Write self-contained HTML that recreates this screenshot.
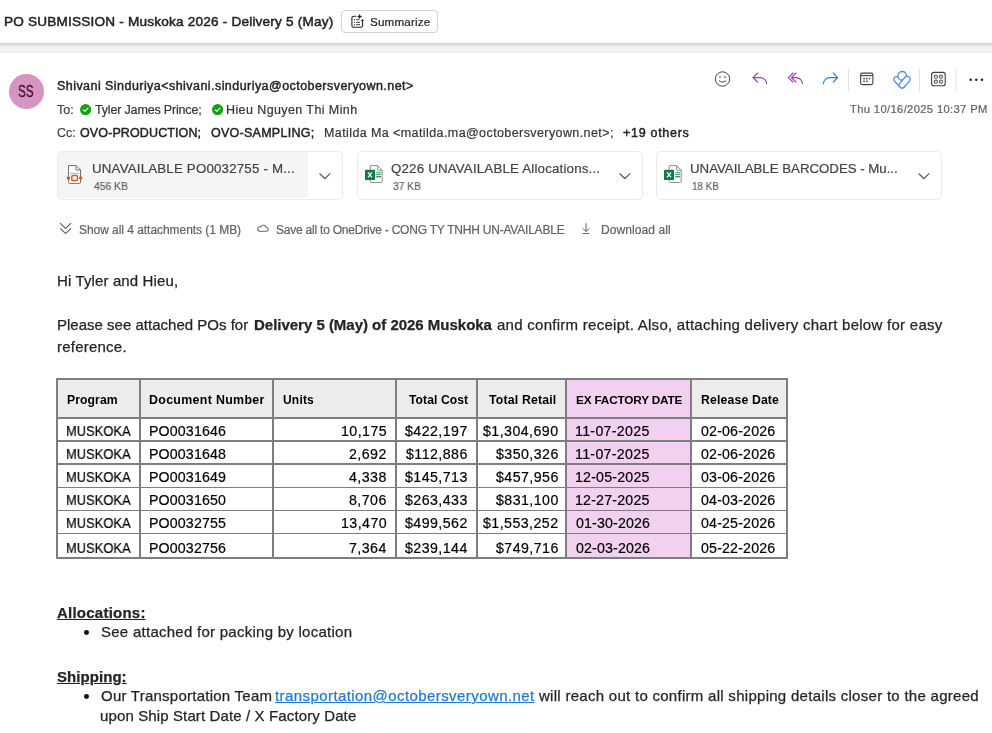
<!DOCTYPE html>
<html><head><meta charset="utf-8">
<style>
html,body{margin:0;padding:0;background:#fff;}
body{width:992px;height:733px;overflow:hidden;position:relative;font-family:"Liberation Sans", sans-serif;}
.t{position:absolute;white-space:nowrap;line-height:1;will-change:transform;}
.abs{position:absolute;}
</style></head><body>
<div class="abs" style="left:341px;top:10px;width:95px;height:21px;border:1px solid #d1d1d1;border-radius:4px;"></div>
<div class="abs" style="left:0;top:43px;width:992px;height:10px;background:linear-gradient(#cdcdcd 0px,#e6e6e6 2px,#f3f3f3 5px,#f3f3f3 8px,#e3e3e3 9px,#fafafa 10px);"></div>
<div class="abs" style="left:8.5px;top:74px;width:35px;height:35px;border-radius:50%;background:#d695c0;"></div>
<svg class="abs" style="left:79.5px;top:104px" width="11.2" height="11.2" viewBox="0 0 11.2 11.2"><circle cx="5.6" cy="5.6" r="5.6" fill="#13a10e"/><path d="M3.3 5.8 L4.9 7.3 L8 4.2" fill="none" stroke="#fff" stroke-width="1.1" stroke-linecap="round" stroke-linejoin="round"/></svg>
<svg class="abs" style="left:212.4px;top:104px" width="11.2" height="11.2" viewBox="0 0 11.2 11.2"><circle cx="5.6" cy="5.6" r="5.6" fill="#13a10e"/><path d="M3.3 5.8 L4.9 7.3 L8 4.2" fill="none" stroke="#fff" stroke-width="1.1" stroke-linecap="round" stroke-linejoin="round"/></svg>
<div class="abs" style="left:57px;top:151px;width:284px;height:46.5px;border:1px solid #ebebeb;border-radius:5px;background:#fff;overflow:hidden;"><div class="abs" style="left:0;top:0;width:250px;height:46px;background:#f5f5f5;"></div></div>
<svg class="abs" style="left:64px;top:163px" width="22" height="22" viewBox="0 0 22 22"><path d="M4.5 2.5 h7.5 l4.5 4.5 v12.5 a0.9 0.9 0 0 1 -0.9 0.9 h-10.2 a0.9 0.9 0 0 1 -0.9 -0.9 z" fill="#fff" stroke="#707070" stroke-width="1"/><path d="M12 2.5 v4.5 h4.5" fill="none" stroke="#707070" stroke-width="1"/><path d="M6 10.3 h9" stroke="#a0a0a0" stroke-width="0.9"/><rect x="7.8" y="12.6" width="5.6" height="4.8" rx="1" fill="none" stroke="#e0512a" stroke-width="1.5"/><circle cx="4.4" cy="15" r="1.75" fill="#e0512a"/><circle cx="16.6" cy="15" r="1.75" fill="#e0512a"/></svg>
<svg class="abs" style="left:318px;top:170.8px" width="14" height="10" viewBox="0 0 14 10"><path d="M1.5 2.5 L6.9 7.5 L12.3 2.4" fill="none" stroke="#616161" stroke-width="1.3"/></svg>
<div class="abs" style="left:357px;top:151px;width:284px;height:46.5px;border:1px solid #ebebeb;border-radius:5px;background:#fff;"></div>
<svg class="abs" style="left:364.1px;top:164px" width="20" height="20" viewBox="-1 -1 20 20"><path d="M5.2 0.6 H12.6 L17.2 5.2 V16.6 a0.9 0.9 0 0 1 -0.9 0.9 H6.1 a0.9 0.9 0 0 1 -0.9 -0.9 Z" fill="#fff" stroke="#8f8f8f" stroke-width="1"/><path d="M12.6 0.6 V4.3 a0.9 0.9 0 0 0 0.9 0.9 H17.2" fill="none" stroke="#8f8f8f" stroke-width="1"/><rect x="11.2" y="6.7" width="4.9" height="1.2" fill="#33c481"/><rect x="11.2" y="8.7" width="4.9" height="1.2" fill="#21a366"/><rect x="11.2" y="11.1" width="4.9" height="1.3" fill="#185c37" opacity="0.8"/><rect x="0" y="4.8" width="10" height="10.1" rx="0.5" fill="#107c41"/><path d="M3 7.4 L7 12.4 M7 7.4 L3 12.4" stroke="#fff" stroke-width="1.25"/></svg>
<svg class="abs" style="left:618px;top:170.8px" width="14" height="10" viewBox="0 0 14 10"><path d="M1.5 2.5 L6.9 7.5 L12.3 2.4" fill="none" stroke="#616161" stroke-width="1.3"/></svg>
<div class="abs" style="left:656px;top:151px;width:284px;height:46.5px;border:1px solid #ebebeb;border-radius:5px;background:#fff;"></div>
<svg class="abs" style="left:662.9px;top:164px" width="20" height="20" viewBox="-1 -1 20 20"><path d="M5.2 0.6 H12.6 L17.2 5.2 V16.6 a0.9 0.9 0 0 1 -0.9 0.9 H6.1 a0.9 0.9 0 0 1 -0.9 -0.9 Z" fill="#fff" stroke="#8f8f8f" stroke-width="1"/><path d="M12.6 0.6 V4.3 a0.9 0.9 0 0 0 0.9 0.9 H17.2" fill="none" stroke="#8f8f8f" stroke-width="1"/><rect x="11.2" y="6.7" width="4.9" height="1.2" fill="#33c481"/><rect x="11.2" y="8.7" width="4.9" height="1.2" fill="#21a366"/><rect x="11.2" y="11.1" width="4.9" height="1.3" fill="#185c37" opacity="0.8"/><rect x="0" y="4.8" width="10" height="10.1" rx="0.5" fill="#107c41"/><path d="M3 7.4 L7 12.4 M7 7.4 L3 12.4" stroke="#fff" stroke-width="1.25"/></svg>
<svg class="abs" style="left:917px;top:170.8px" width="14" height="10" viewBox="0 0 14 10"><path d="M1.5 2.5 L6.9 7.5 L12.3 2.4" fill="none" stroke="#616161" stroke-width="1.3"/></svg>
<svg class="abs" style="left:59px;top:221px" width="14" height="14" viewBox="0 0 14 14"><path d="M1.1 2.1 L6.6 7.4 L12 2.1 M1.1 7.3 L6.6 12.4 L12 7.3" fill="none" stroke="#616161" stroke-width="1.1"/></svg>
<svg class="abs" style="left:254px;top:221px" width="16" height="14" viewBox="254 221 16 14"><path d="M259.4 231.3 H266.3 A1.9 1.9 0 0 0 266.3 227.5 A2.9 2.9 0 0 0 260.8 226.9 A2.2 2.2 0 0 0 259.4 231.3 Z" fill="none" stroke="#616161" stroke-width="1.05"/></svg>
<svg class="abs" style="left:580px;top:221px" width="12" height="14" viewBox="0 0 12 14"><path d="M6 2.2 v8.5 M2.6 7.2 L6 10.5 L9.4 7.2 M2.8 12.5 h6.3" fill="none" stroke="#616161" stroke-width="1"/></svg>
<svg class="abs" style="left:700px;top:62px" width="292" height="34" viewBox="700 62 292 34">
<circle cx="722.5" cy="79" r="7.2" fill="none" stroke="#424242" stroke-width="1"/>
<circle cx="720" cy="77" r="0.85" fill="#424242"/><circle cx="725" cy="77" r="0.85" fill="#424242"/>
<path d="M719.2 80.8 q3.3 2.8 6.6 0" fill="none" stroke="#424242" stroke-width="1" stroke-linecap="round"/>
<g fill="none" stroke="#9c3db3" stroke-width="1.15" stroke-linecap="round" stroke-linejoin="round">
<path d="M757.6 73 L753 77.6 L757.6 82 M753 77.6 H760 A6.7 6.3 0 0 1 766.7 83.6"/>
<path d="M793 73 L788.3 77.6 L793 82 M796 73 L791.3 77.6 L796 82 M791.3 77.6 H796 A6.5 6.3 0 0 1 802.5 83.6"/>
</g>
<g fill="none" stroke="#1f84d8" stroke-width="1.15" stroke-linecap="round" stroke-linejoin="round">
<path d="M833.2 73 L837.7 77.6 L833.2 82 M837.7 77.6 H830 A6.7 6.3 0 0 0 823.4 83.6"/>
</g>
<rect x="848" y="69" width="1" height="22" fill="#e0e0e0"/>
<rect x="860.6" y="73.1" width="12.3" height="11.5" rx="1.8" fill="none" stroke="#424242" stroke-width="1.1"/>
<path d="M860.6 75.6 H872.9" stroke="#424242" stroke-width="1.1"/>
<g fill="#424242"><rect x="863.3" y="77.8" width="1.5" height="1.5"/><rect x="866" y="77.8" width="1.5" height="1.5"/><rect x="868.7" y="77.8" width="1.5" height="1.5"/><rect x="863.3" y="80.6" width="1.5" height="1.5"/><rect x="866" y="80.6" width="1.5" height="1.5"/></g>
<g fill="#fff" stroke="#4f8ef7" stroke-width="1.3">
<rect x="-2.8" y="-2.8" width="13.6" height="5.6" rx="2.8" transform="translate(896.6 79.4) rotate(47)"/>
<circle cx="902.2" cy="75.8" r="4.3"/>
<rect x="-2.9" y="-2.9" width="13.7" height="5.8" rx="2.9" transform="translate(902 85.1) rotate(-48.5)"/>
</g>
<rect x="919" y="69" width="1" height="22" fill="#e0e0e0"/>
<rect x="931.6" y="72.4" width="13.6" height="13.4" rx="2.3" fill="none" stroke="#424242" stroke-width="1.1"/>
<g fill="none" stroke="#424242" stroke-width="1"><rect x="934.4" y="75.2" width="2.9" height="2.9" rx="0.5"/><rect x="939.5" y="75.2" width="2.9" height="2.9" rx="0.5"/><rect x="934.4" y="80.2" width="2.9" height="2.9" rx="0.5"/><rect x="939.5" y="80.2" width="2.9" height="2.9" rx="0.5"/></g>
<rect x="955.5" y="69" width="1" height="22" fill="#e0e0e0"/>
<g fill="#242424"><circle cx="970.7" cy="79.8" r="1.3"/><circle cx="976.3" cy="79.8" r="1.3"/><circle cx="982" cy="79.8" r="1.3"/></g>
</svg>

<svg class="abs" style="left:349px;top:13px" width="18" height="18" viewBox="349 13 18 18">
<path d="M356.3 16.3 H353.7 a1.8 1.8 0 0 0 -1.8 1.8 v7.3 a1.8 1.8 0 0 0 1.8 1.8 h7.1 a1.8 1.8 0 0 0 1.8 -1.8 v-3.3" fill="none" stroke="#242424" stroke-width="1.1"/>
<g fill="#242424"><circle cx="354.6" cy="19.7" r="0.6"/><circle cx="354.6" cy="22.3" r="0.6"/><circle cx="354.6" cy="24.7" r="0.6"/></g>
<path d="M356.2 19.7 h3.2 M356.2 22.3 h3.9 M356.2 24.7 h3.9" stroke="#242424" stroke-width="0.9"/>
<path d="M359.6 13.9 q0.5 2.1 2.6 2.6 q-2.1 0.5 -2.6 2.6 q-0.5 -2.1 -2.6 -2.6 q2.1 -0.5 2.6 -2.6 z" fill="#242424"/>
<path d="M362.4 18.8 q0.35 1.45 1.8 1.8 q-1.45 0.35 -1.8 1.8 q-0.35 -1.45 -1.8 -1.8 q1.45 -0.35 1.8 -1.8 z" fill="#242424"/>
</svg>

<div class="abs" style="left:57px;top:379px;width:730px;height:39px;background:#ececec;"></div>
<div class="abs" style="left:566px;top:379px;width:125px;height:179px;background:#f2d0ef;"></div>
<div class="abs" style="left:56.05px;top:378.05px;width:1.5px;height:180.54999999999998px;background:#7e7e7e;"></div>
<div class="abs" style="left:139.05px;top:378.05px;width:1.5px;height:180.54999999999998px;background:#7e7e7e;"></div>
<div class="abs" style="left:272.05px;top:378.05px;width:1.5px;height:180.54999999999998px;background:#7e7e7e;"></div>
<div class="abs" style="left:395.05px;top:378.05px;width:1.5px;height:180.54999999999998px;background:#7e7e7e;"></div>
<div class="abs" style="left:476.05px;top:378.05px;width:1.5px;height:180.54999999999998px;background:#7e7e7e;"></div>
<div class="abs" style="left:565.05px;top:378.05px;width:1.5px;height:180.54999999999998px;background:#7e7e7e;"></div>
<div class="abs" style="left:690.05px;top:378.05px;width:1.5px;height:180.54999999999998px;background:#7e7e7e;"></div>
<div class="abs" style="left:786.05px;top:378.05px;width:1.5px;height:180.54999999999998px;background:#7e7e7e;"></div>
<div class="abs" style="left:56.05px;top:378.05px;width:731.5500000000001px;height:1.5px;background:#7e7e7e;"></div>
<div class="abs" style="left:56.05px;top:417.05px;width:731.5500000000001px;height:1.5px;background:#7e7e7e;"></div>
<div class="abs" style="left:56.05px;top:440.05px;width:731.5500000000001px;height:1.5px;background:#7e7e7e;"></div>
<div class="abs" style="left:56.05px;top:463.05px;width:731.5500000000001px;height:1.5px;background:#7e7e7e;"></div>
<div class="abs" style="left:56.05px;top:486.55px;width:731.5500000000001px;height:1.5px;background:#7e7e7e;"></div>
<div class="abs" style="left:56.05px;top:509.55px;width:731.5500000000001px;height:1.5px;background:#7e7e7e;"></div>
<div class="abs" style="left:56.05px;top:532.55px;width:731.5500000000001px;height:1.5px;background:#7e7e7e;"></div>
<div class="abs" style="left:56.05px;top:557.05px;width:731.5500000000001px;height:1.5px;background:#7e7e7e;"></div>
<div class="abs" style="left:84.1px;top:630.4px;width:4.8px;height:4.8px;border-radius:50%;background:#111;"></div>
<div class="abs" style="left:84.1px;top:694.4px;width:4.8px;height:4.8px;border-radius:50%;background:#111;"></div>
<div class="t" style="left:3.60px;top:15px;font-size:13.6px;color:#242424;letter-spacing:0.196px;-webkit-text-stroke:0.5px #242424;">PO SUBMISSION - Muskoka 2026 - Delivery 5 (May)</div>
<div class="t" style="left:369.60px;top:16px;font-size:11.7px;color:#242424;letter-spacing:0.150px;-webkit-text-stroke-width:0.2px;">Summarize</div>
<div class="t" style="left:18.40px;top:84px;font-size:15.6px;color:#420b35;transform:scaleX(0.7402);transform-origin:0 0;-webkit-text-stroke:0.3px #4a0d3a;">SS</div>
<div class="t" style="left:57.00px;top:80px;font-size:12.5px;color:#242424;letter-spacing:0.449px;-webkit-text-stroke:0.45px #242424;">Shivani Sinduriya&lt;shivani.sinduriya@octobersveryown.net&gt;</div>
<div class="t" style="left:57.00px;top:104px;font-size:12.5px;color:#424242;-webkit-text-stroke-width:0.2px;">To:</div>
<div class="t" style="left:95.30px;top:104px;font-size:12.5px;color:#333333;letter-spacing:-0.171px;-webkit-text-stroke-width:0.2px;">Tyler James Prince;</div>
<div class="t" style="left:225.60px;top:104px;font-size:12.5px;color:#333333;letter-spacing:0.404px;-webkit-text-stroke-width:0.2px;">Hieu Nguyen Thi Minh</div>
<div class="t" style="left:57.00px;top:127px;font-size:12.5px;color:#424242;-webkit-text-stroke-width:0.2px;">Cc:</div>
<div class="t" style="left:80.40px;top:127px;font-size:12.5px;color:#242424;letter-spacing:0.116px;-webkit-text-stroke:0.45px #242424;">OVO-PRODUCTION;</div>
<div class="t" style="left:211.00px;top:127px;font-size:12.5px;color:#242424;letter-spacing:0.263px;-webkit-text-stroke:0.45px #242424;">OVO-SAMPLING;</div>
<div class="t" style="left:324.00px;top:127px;font-size:12.5px;color:#333333;letter-spacing:0.408px;-webkit-text-stroke-width:0.2px;">Matilda Ma &lt;matilda.ma@octobersveryown.net&gt;;</div>
<div class="t" style="left:623.00px;top:127px;font-size:12.5px;color:#242424;letter-spacing:0.704px;-webkit-text-stroke:0.45px #242424;">+19 others</div>
<div class="t" style="left:850.00px;top:104px;font-size:11.2px;color:#616161;letter-spacing:0.361px;-webkit-text-stroke-width:0.2px;">Thu 10/16/2025 10:37 PM</div>
<div class="t" style="left:91.60px;top:162px;font-size:13.3px;color:#424242;letter-spacing:0.186px;-webkit-text-stroke-width:0.2px;">UNAVAILABLE PO0032755 - M...</div>
<div class="t" style="left:93.90px;top:181px;font-size:10.8px;color:#616161;transform:scaleX(0.9570);transform-origin:0 0;-webkit-text-stroke-width:0.2px;">456 KB</div>
<div class="t" style="left:391.40px;top:162px;font-size:13.3px;color:#424242;letter-spacing:0.185px;-webkit-text-stroke-width:0.2px;">Q226 UNAVAILABLE Allocations...</div>
<div class="t" style="left:392.80px;top:181px;font-size:10.8px;color:#616161;transform:scaleX(0.9483);transform-origin:0 0;-webkit-text-stroke-width:0.2px;">37 KB</div>
<div class="t" style="left:690.40px;top:162px;font-size:13.3px;color:#424242;letter-spacing:-0.034px;-webkit-text-stroke-width:0.2px;">UNAVAILABLE BARCODES - Mu...</div>
<div class="t" style="left:691.70px;top:181px;font-size:10.8px;color:#616161;transform:scaleX(0.9106);transform-origin:0 0;-webkit-text-stroke-width:0.2px;">18 KB</div>
<div class="t" style="left:79.40px;top:224px;font-size:12px;color:#616161;letter-spacing:-0.047px;-webkit-text-stroke-width:0.2px;">Show all 4 attachments (1 MB)</div>
<div class="t" style="left:276.10px;top:224px;font-size:12px;color:#616161;letter-spacing:-0.220px;-webkit-text-stroke-width:0.2px;">Save all to OneDrive - CONG TY TNHH UN-AVAILABLE</div>
<div class="t" style="left:600.60px;top:224px;font-size:12px;color:#616161;letter-spacing:0.087px;-webkit-text-stroke-width:0.2px;">Download all</div>
<div class="t" style="left:56.80px;top:273px;font-size:15.0px;color:#242424;letter-spacing:0.127px;-webkit-text-stroke-width:0.25px;">Hi Tyler and Hieu,</div>
<div class="t" style="left:56.80px;top:317px;font-size:15.0px;color:#242424;letter-spacing:0.010px;-webkit-text-stroke-width:0.25px;">Please see attached POs for</div>
<div class="t" style="left:254.00px;top:317px;font-size:15.0px;color:#242424;letter-spacing:-0.016px;-webkit-text-stroke-width:0.25px;"><span style="font-weight:bold;">Delivery 5 (May) of 2026 Muskoka</span></div>
<div class="t" style="left:497.40px;top:317px;font-size:15.0px;color:#242424;letter-spacing:0.270px;-webkit-text-stroke-width:0.25px;">and confirm receipt. Also, attaching delivery chart below for easy</div>
<div class="t" style="left:56.80px;top:339px;font-size:15.0px;color:#242424;letter-spacing:0.226px;-webkit-text-stroke-width:0.25px;">reference.</div>
<div class="t" style="left:66.70px;top:394px;font-size:12.2px;color:#000;letter-spacing:0.086px;"><span style="font-weight:bold;">Program</span></div>
<div class="t" style="left:148.60px;top:394px;font-size:12.4px;color:#000;letter-spacing:0.320px;"><span style="font-weight:bold;">Document Number</span></div>
<div class="t" style="left:282.50px;top:394px;font-size:12.0px;color:#000;letter-spacing:0.193px;"><span style="font-weight:bold;">Units</span></div>
<div class="t" style="left:408.60px;top:394px;font-size:12.1px;color:#000;letter-spacing:0.089px;"><span style="font-weight:bold;">Total Cost</span></div>
<div class="t" style="left:488.70px;top:394px;font-size:12.3px;color:#000;letter-spacing:0.168px;"><span style="font-weight:bold;">Total Retail</span></div>
<div class="t" style="left:575.80px;top:395px;font-size:11.8px;color:#000;letter-spacing:-0.184px;"><span style="font-weight:bold;">EX FACTORY DATE</span></div>
<div class="t" style="left:700.50px;top:394px;font-size:12.2px;color:#000;letter-spacing:0.182px;"><span style="font-weight:bold;">Release Date</span></div>
<div class="t" style="left:66.09px;top:424px;font-size:14.2px;color:#000;transform:scaleX(0.9115);transform-origin:0 0;-webkit-text-stroke-width:0.2px;">MUSKOKA</div>
<div class="t" style="left:148.50px;top:424px;font-size:14.2px;color:#000;letter-spacing:0.145px;-webkit-text-stroke-width:0.2px;">PO0031646</div>
<div class="t" style="left:340.95px;top:424px;font-size:14.2px;color:#000;letter-spacing:0.450px;-webkit-text-stroke-width:0.2px;">10,175</div>
<div class="t" style="left:405.37px;top:424px;font-size:14.2px;color:#000;letter-spacing:0.450px;-webkit-text-stroke-width:0.2px;">$422,197</div>
<div class="t" style="left:483.03px;top:424px;font-size:14.2px;color:#000;letter-spacing:0.450px;-webkit-text-stroke-width:0.2px;">$1,304,690</div>
<div class="t" style="left:574.80px;top:424px;font-size:14.2px;color:#000;letter-spacing:0.319px;-webkit-text-stroke-width:0.2px;">11-07-2025</div>
<div class="t" style="left:700.50px;top:424px;font-size:14.2px;color:#000;letter-spacing:0.180px;-webkit-text-stroke-width:0.2px;">02-06-2026</div>
<div class="t" style="left:66.09px;top:447px;font-size:14.2px;color:#000;transform:scaleX(0.9115);transform-origin:0 0;-webkit-text-stroke-width:0.2px;">MUSKOKA</div>
<div class="t" style="left:148.50px;top:447px;font-size:14.2px;color:#000;letter-spacing:0.145px;-webkit-text-stroke-width:0.2px;">PO0031648</div>
<div class="t" style="left:349.29px;top:447px;font-size:14.2px;color:#000;letter-spacing:0.450px;-webkit-text-stroke-width:0.2px;">2,692</div>
<div class="t" style="left:406.42px;top:447px;font-size:14.2px;color:#000;letter-spacing:0.450px;-webkit-text-stroke-width:0.2px;">$112,886</div>
<div class="t" style="left:495.77px;top:447px;font-size:14.2px;color:#000;letter-spacing:0.450px;-webkit-text-stroke-width:0.2px;">$350,326</div>
<div class="t" style="left:574.80px;top:447px;font-size:14.2px;color:#000;letter-spacing:0.319px;-webkit-text-stroke-width:0.2px;">11-07-2025</div>
<div class="t" style="left:700.50px;top:447px;font-size:14.2px;color:#000;letter-spacing:0.180px;-webkit-text-stroke-width:0.2px;">02-06-2026</div>
<div class="t" style="left:66.09px;top:470px;font-size:14.2px;color:#000;transform:scaleX(0.9115);transform-origin:0 0;-webkit-text-stroke-width:0.2px;">MUSKOKA</div>
<div class="t" style="left:148.50px;top:470px;font-size:14.2px;color:#000;letter-spacing:0.145px;-webkit-text-stroke-width:0.2px;">PO0031649</div>
<div class="t" style="left:349.29px;top:470px;font-size:14.2px;color:#000;letter-spacing:0.450px;-webkit-text-stroke-width:0.2px;">4,338</div>
<div class="t" style="left:405.37px;top:470px;font-size:14.2px;color:#000;letter-spacing:0.450px;-webkit-text-stroke-width:0.2px;">$145,713</div>
<div class="t" style="left:495.77px;top:470px;font-size:14.2px;color:#000;letter-spacing:0.450px;-webkit-text-stroke-width:0.2px;">$457,956</div>
<div class="t" style="left:574.80px;top:470px;font-size:14.2px;color:#000;letter-spacing:0.202px;-webkit-text-stroke-width:0.2px;">12-05-2025</div>
<div class="t" style="left:700.50px;top:470px;font-size:14.2px;color:#000;letter-spacing:0.180px;-webkit-text-stroke-width:0.2px;">03-06-2026</div>
<div class="t" style="left:66.09px;top:493px;font-size:14.2px;color:#000;transform:scaleX(0.9115);transform-origin:0 0;-webkit-text-stroke-width:0.2px;">MUSKOKA</div>
<div class="t" style="left:148.50px;top:493px;font-size:14.2px;color:#000;letter-spacing:0.145px;-webkit-text-stroke-width:0.2px;">PO0031650</div>
<div class="t" style="left:349.29px;top:493px;font-size:14.2px;color:#000;letter-spacing:0.450px;-webkit-text-stroke-width:0.2px;">8,706</div>
<div class="t" style="left:405.37px;top:493px;font-size:14.2px;color:#000;letter-spacing:0.450px;-webkit-text-stroke-width:0.2px;">$263,433</div>
<div class="t" style="left:495.77px;top:493px;font-size:14.2px;color:#000;letter-spacing:0.450px;-webkit-text-stroke-width:0.2px;">$831,100</div>
<div class="t" style="left:574.80px;top:493px;font-size:14.2px;color:#000;letter-spacing:0.202px;-webkit-text-stroke-width:0.2px;">12-27-2025</div>
<div class="t" style="left:700.50px;top:493px;font-size:14.2px;color:#000;letter-spacing:0.180px;-webkit-text-stroke-width:0.2px;">04-03-2026</div>
<div class="t" style="left:66.09px;top:516px;font-size:14.2px;color:#000;transform:scaleX(0.9115);transform-origin:0 0;-webkit-text-stroke-width:0.2px;">MUSKOKA</div>
<div class="t" style="left:148.50px;top:516px;font-size:14.2px;color:#000;letter-spacing:0.145px;-webkit-text-stroke-width:0.2px;">PO0032755</div>
<div class="t" style="left:340.95px;top:516px;font-size:14.2px;color:#000;letter-spacing:0.450px;-webkit-text-stroke-width:0.2px;">13,470</div>
<div class="t" style="left:405.37px;top:516px;font-size:14.2px;color:#000;letter-spacing:0.450px;-webkit-text-stroke-width:0.2px;">$499,562</div>
<div class="t" style="left:483.03px;top:516px;font-size:14.2px;color:#000;letter-spacing:0.450px;-webkit-text-stroke-width:0.2px;">$1,553,252</div>
<div class="t" style="left:575.80px;top:516px;font-size:14.2px;color:#000;letter-spacing:0.146px;-webkit-text-stroke-width:0.2px;">01-30-2026</div>
<div class="t" style="left:700.50px;top:516px;font-size:14.2px;color:#000;letter-spacing:0.180px;-webkit-text-stroke-width:0.2px;">04-25-2026</div>
<div class="t" style="left:66.09px;top:541px;font-size:14.2px;color:#000;transform:scaleX(0.9115);transform-origin:0 0;-webkit-text-stroke-width:0.2px;">MUSKOKA</div>
<div class="t" style="left:148.50px;top:541px;font-size:14.2px;color:#000;letter-spacing:0.145px;-webkit-text-stroke-width:0.2px;">PO0032756</div>
<div class="t" style="left:349.29px;top:541px;font-size:14.2px;color:#000;letter-spacing:0.450px;-webkit-text-stroke-width:0.2px;">7,364</div>
<div class="t" style="left:405.37px;top:541px;font-size:14.2px;color:#000;letter-spacing:0.450px;-webkit-text-stroke-width:0.2px;">$239,144</div>
<div class="t" style="left:495.77px;top:541px;font-size:14.2px;color:#000;letter-spacing:0.450px;-webkit-text-stroke-width:0.2px;">$749,716</div>
<div class="t" style="left:575.80px;top:541px;font-size:14.2px;color:#000;letter-spacing:0.146px;-webkit-text-stroke-width:0.2px;">02-03-2026</div>
<div class="t" style="left:700.50px;top:541px;font-size:14.2px;color:#000;letter-spacing:0.180px;-webkit-text-stroke-width:0.2px;">05-22-2026</div>
<div class="t" style="left:57.00px;top:605px;font-size:15.0px;color:#242424;letter-spacing:0.232px;-webkit-text-stroke-width:0.25px;"><span style="font-weight:bold;text-decoration:underline;text-underline-offset:1px;">Allocations:</span></div>
<div class="t" style="left:101.00px;top:624px;font-size:15.0px;color:#242424;letter-spacing:0.263px;-webkit-text-stroke-width:0.25px;">See attached for packing by location</div>
<div class="t" style="left:57.00px;top:669px;font-size:15.0px;color:#242424;letter-spacing:0.056px;-webkit-text-stroke-width:0.25px;"><span style="font-weight:bold;text-decoration:underline;text-underline-offset:1px;">Shipping:</span></div>
<div class="t" style="left:101.00px;top:688px;font-size:15.0px;color:#242424;letter-spacing:0.242px;-webkit-text-stroke-width:0.25px;">Our Transportation Team</div>
<div class="t" style="left:275.40px;top:688px;font-size:15.0px;color:#1e7ad6;letter-spacing:0.419px;-webkit-text-stroke-width:0.25px;"><span style="text-decoration:underline;">transportation@octobersveryown.net</span></div>
<div class="t" style="left:539.10px;top:688px;font-size:15.0px;color:#242424;letter-spacing:0.282px;-webkit-text-stroke-width:0.25px;">will reach out to confirm all shipping details closer to the agreed</div>
<div class="t" style="left:100.00px;top:708px;font-size:15.0px;color:#242424;letter-spacing:0.124px;-webkit-text-stroke-width:0.25px;">upon Ship Start Date / X Factory Date</div>
</body></html>
